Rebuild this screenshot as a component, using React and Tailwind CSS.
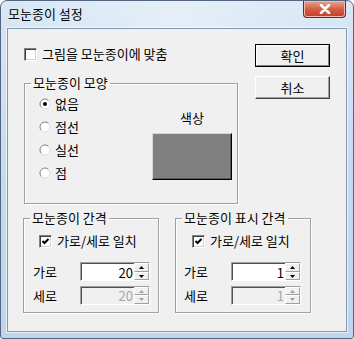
import React from "react"

const KR = "font-['Noto_Sans_CJK_KR',sans-serif]"

function CheckBox({ checked }) {
  return (
    <span className="flex w-[13px] h-[13px] shrink-0 items-center justify-center bg-white border border-t-[#808080] border-l-[#808080] border-r-white border-b-white shadow-[inset_1px_1px_0_#404040,inset_-1px_-1px_0_#d4d0c8]">
      {checked && (
        <svg width="9" height="9" viewBox="0 0 9 9">
          <path d="M1.5 4 L3.5 6 L7.5 2" fill="none" stroke="#000" strokeWidth="2" />
        </svg>
      )}
    </span>
  )
}

function Radio({ on }) {
  return (
    <svg width="12" height="12" viewBox="0 0 12 12" className="shrink-0">
      <circle cx="6" cy="6" r="5" fill="#fff" />
      <path d="M2.46 9.54 A5 5 0 0 1 9.54 2.46" fill="none" stroke="#808080" />
      <path d="M9.54 2.46 A5 5 0 0 1 2.46 9.54" fill="none" stroke="#dcdcdc" />
      {on && <circle cx="6" cy="6" r="2" fill="#000" />}
    </svg>
  )
}

function SpinBtn({ up, disabled }) {
  return (
    <div className="flex-1 flex items-center justify-center bg-[#f0f0f0] border border-t-white border-l-white border-b-[#a0a0a0] border-r-[#a0a0a0]">
      <svg width="5" height="3" viewBox="0 0 5 3">
        <path d={up ? "M2.5 0 L5 3 L0 3 Z" : "M0 0 L5 0 L2.5 3 Z"} fill={disabled ? "#a0a0a0" : "#000"} />
      </svg>
    </div>
  )
}

function Spin({ value, disabled }) {
  return (
    <div className="flex w-[70px] h-[19px] border border-t-[#a0a0a0] border-l-[#a0a0a0] border-r-white border-b-white">
      <div
        className={
          "flex-1 flex items-center justify-end pr-[1px] text-[13px] leading-none border-t border-l border-t-[#505050] border-l-[#505050] " +
          (disabled ? "bg-[#f0f0f0] text-[#a8a8a8]" : "bg-white text-black")
        }
      >
        {value}
      </div>
      <div className="w-[15px] flex flex-col">
        <SpinBtn up disabled={disabled} />
        <SpinBtn disabled={disabled} />
      </div>
    </div>
  )
}

function Group({ title, className, children }) {
  return (
    <fieldset className={"border border-[#a0a0a0] shadow-[inset_1px_1px_0_#fff,1px_1px_0_#fff] " + className}>
      <legend className="ml-[6px] px-[2px] h-[14px] text-[13px] leading-[14px]">{title}</legend>
      {children}
    </fieldset>
  )
}

function SpinGroup({ title, value, labelPad, checkPad }) {
  return (
    <Group title={title} className="w-[136px] h-[102px]">
      <div className={"flex items-center gap-[5px] h-[14px] mt-[9px] " + checkPad}>
        <CheckBox checked />
        <span className="text-[13px]">가로/세로 일치</span>
      </div>
      <div className={"flex flex-col gap-[4px] mt-[14px] " + labelPad}>
        <div className="flex items-center">
          <span className="w-[47px] text-[13px]">가로</span>
          <Spin value={value} />
        </div>
        <div className="flex items-center">
          <span className="w-[47px] text-[13px]">세로</span>
          <Spin value={value} disabled />
        </div>
      </div>
    </Group>
  )
}

export default function App() {
  return (
    <div className={"w-[354px] h-[339px] flex flex-col rounded-t-[7px] rounded-b-[3px] border border-[#52677f] bg-gradient-to-b from-[#d9e7f6] via-[#c6daf0] to-[#bfd5ee] text-black " + KR}>
      {/* Title bar */}
      <div className="h-[27px] flex items-start justify-between shrink-0 bg-gradient-to-r from-transparent via-[#ffffff55] to-transparent">
        <span className="pl-[7px] pt-[5px] text-[13px] leading-[16px]">모눈종이 설정</span>
        <div className="mr-[7px] w-[43px] h-[17px] flex items-center justify-center rounded-b-[4px] border border-t-0 border-[#6d2a22] bg-gradient-to-b from-[#e9a58f] via-[#d25f45] to-[#c13d25] shadow-[inset_0_0_0_1px_#f3b8a8]">
          <svg width="12" height="10" viewBox="0 0 12 10">
            <path d="M2 1 L10 9 M10 1 L2 9" stroke="#fff" strokeWidth="2.6" strokeLinecap="round" />
          </svg>
        </div>
      </div>

      {/* Client area */}
      <div className="mx-[6px] mb-[6px] flex-1 bg-[#f0f0f0] border border-[#8296af] shadow-[0_0_0_1px_#ffffffaa]">
        <div className="flex">
          <div className="pl-[16px] pt-[18px]">
            <div className="flex items-center gap-[5px] h-[14px]">
              <CheckBox />
              <span className="text-[13px]">그림을 모눈종이에 맞춤</span>
            </div>
            <Group title="모눈종이 모양" className="mt-[15px] w-[214px] h-[128px]">
              <div className="flex">
                <div className="flex flex-col gap-[9px] pl-[14px] pt-[7px]">
                  {[
                    ["없음", true],
                    ["점선", false],
                    ["실선", false],
                    ["점", false],
                  ].map(([t, on]) => (
                    <div key={t} className="flex items-center gap-[4px] h-[14px]">
                      <Radio on={on} />
                      <span className="text-[13px]">{t}</span>
                    </div>
                  ))}
                </div>
                <div className="ml-auto mr-[5px] pt-[21px] flex flex-col items-center gap-[8px]">
                  <span className="h-[14px] text-[13px] leading-[14px]">색상</span>
                  <div className="w-[80px] h-[47px] bg-[#808080] border border-t-[#d8d8d8] border-l-[#d8d8d8] border-r-black border-b-black shadow-[inset_-1px_-1px_0_#5a5a5a]" />
                </div>
              </div>
            </Group>
          </div>

          <div className="ml-[17px] pt-[15px] flex flex-col gap-[9px]">
            <div className="w-[75px] h-[23px] border border-black">
              <div className="w-full h-full flex items-center justify-center text-[13px] border border-t-white border-l-white border-r-[#808080] border-b-[#808080]">
                확인
              </div>
            </div>
            <div className="w-[75px] h-[23px] flex items-center justify-center text-[13px] border border-t-white border-l-white border-r-[#404040] border-b-[#404040] shadow-[inset_-1px_-1px_0_#a0a0a0]">
              취소
            </div>
          </div>
        </div>

        <div className="flex gap-[16px] pl-[15px] mt-[7px]">
          <SpinGroup title="모눈종이 간격" value="20" checkPad="pl-[15px]" labelPad="pl-[9px]" />
          <SpinGroup title="모눈종이 표시 간격" value="1" checkPad="pl-[16px]" labelPad="pl-[8px]" />
        </div>
      </div>
    </div>
  )
}
